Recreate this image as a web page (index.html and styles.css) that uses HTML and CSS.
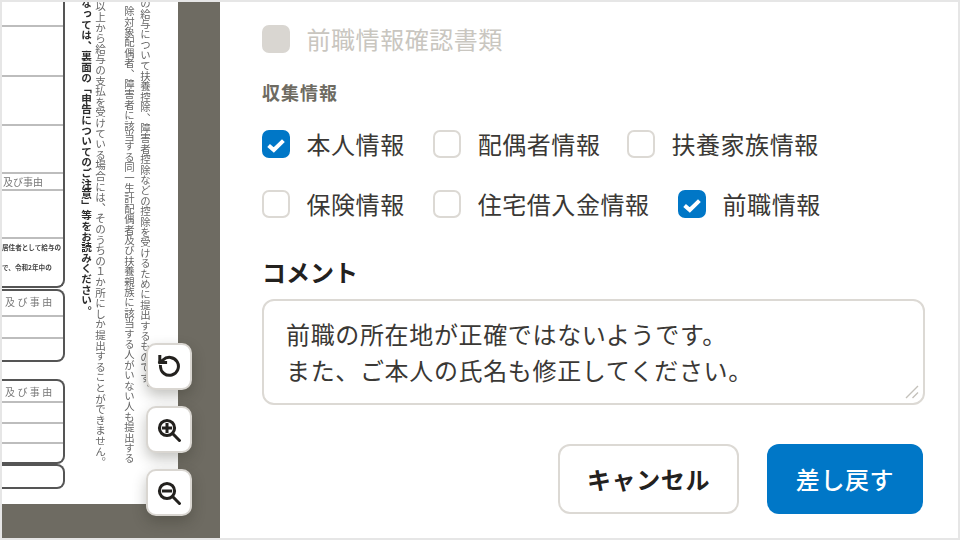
FILE: index.html
```html
<!DOCTYPE html>
<html lang="ja">
<head>
<meta charset="utf-8">
<title>差し戻し</title>
<link rel="stylesheet" href="styles.css">
</head>
<body>
<main class="frame">
  <section class="viewer">
    <div class="paper">
      <div class="form">
        <div class="box box-top">
          <div class="cell h25"></div>
          <div class="cell h50"></div>
          <div class="cell h49"></div>
          <div class="cell h48"></div>
          <div class="cell h17 reason">及び事由</div>
          <div class="cell h48"></div>
          <div class="note">
            <span>居住者として給与の</span>
            <span>で、令和2年中の</span>
          </div>
        </div>
        <div class="box box-a">
          <div class="cell h26 reason wide">及び事由</div>
          <div class="cell h22"></div>
          <div class="cell h22 last"></div>
        </div>
        <div class="box box-b">
          <div class="cell h22 reason wide">及び事由</div>
          <div class="cell h21"></div>
          <div class="cell h20"></div>
          <div class="cell h20 last"></div>
        </div>
        <div class="box box-c"></div>
      </div>
      <div class="columns">
        <p class="vtext strong c4">なっては、裏面の「申告についてのご注意」等をお読みください。</p>
        <p class="vtext c3">以上から給与の支払を受けている場合には、そのうちの１か所にしか提出することができません。</p>
        <p class="vtext c2">除対象配偶者、障害者に該当する同一生計配偶者及び扶養親族に該当する人がいない人も提出する</p>
        <p class="vtext c1">の給与について扶養控除、障害者控除などの控除を受けるために提出するものです。</p>
      </div>
    </div>
    <div class="tools">
      <button class="tool" type="button" aria-label="回転">
        <svg viewBox="0 0 24 24" class="tool-icon"><path d="M3.4 11.4a9 9 0 1 0 2.6-6.4L2.8 7.4"/><path d="M2.8 1.6v5.8h5.8"/></svg>
      </button>
      <button class="tool" type="button" aria-label="拡大">
        <svg viewBox="0 0 24 24" class="tool-icon"><circle cx="10" cy="10" r="7.6"/><path d="M15.6 15.6 22.4 22.4"/><path d="M6.4 10h7.2M10 6.4v7.2"/></svg>
      </button>
      <button class="tool" type="button" aria-label="縮小">
        <svg viewBox="0 0 24 24" class="tool-icon"><circle cx="10" cy="10" r="7.6"/><path d="M15.6 15.6 22.4 22.4"/><path d="M6.4 10h7.2"/></svg>
      </button>
    </div>
  </section>

  <section class="panel">
    <div class="check-row first">
      <label class="check disabled"><span class="box-input"></span><span>前職情報確認書類</span></label>
    </div>
    <h2 class="section-label">収集情報</h2>
    <div class="check-row info">
      <label class="check"><span class="box-input on"><svg viewBox="0 0 28 28"><path d="M6.6 15.4 11.8 20 21.4 10.6"/></svg></span><span>本人情報</span></label>
      <label class="check tight"><span class="box-input"></span><span>配偶者情報</span></label>
      <label class="check"><span class="box-input"></span><span>扶養家族情報</span></label>
    </div>
    <div class="check-row info second">
      <label class="check"><span class="box-input"></span><span>保険情報</span></label>
      <label class="check"><span class="box-input"></span><span>住宅借入金情報</span></label>
      <label class="check"><span class="box-input on"><svg viewBox="0 0 28 28"><path d="M6.6 15.4 11.8 20 21.4 10.6"/></svg></span><span>前職情報</span></label>
    </div>
    <label class="comment-label" for="comment">コメント</label>
    <div class="comment-wrap">
      <textarea id="comment" class="comment">前職の所在地が正確ではないようです。
また、ご本人の氏名も修正してください。</textarea>
      <svg class="grip" viewBox="0 0 14 14"><path d="M1 13 13 1M7.5 13 13 7.5"/></svg>
    </div>
    <div class="actions">
      <button class="btn cancel" type="button">キャンセル</button>
      <button class="btn primary" type="button">差し戻す</button>
    </div>
  </section>
</main>
</body>
</html>
```
FILE: styles.css
```css
* { box-sizing: border-box; }
html, body { margin: 0; padding: 0; }
body {
  width: 960px;
  height: 540px;
  overflow: hidden;
  background: #fff;
  font-family: "Noto Sans CJK JP", "Noto Sans", sans-serif;
  color: #3a3835;
}
.frame {
  width: 960px;
  height: 540px;
  border: 2px solid #e6e6e6;
  display: flex;
}

/* document viewer */
.viewer {
  width: 218px;
  flex: none;
  background: #6e6b62;
  position: relative;
  overflow: hidden;
}
.paper {
  width: 176px;
  height: 502px;
  background: #fff;
  display: flex;
  overflow: hidden;
  filter: blur(0.6px);
}
.form { width: 63px; flex: none; display: flex; flex-direction: column; }
.box {
  border: 2px solid #555;
  border-left: 0;
  border-radius: 0 8px 8px 0;
}
.box-top { height: 286px; border-top: 0; border-radius: 0 0 8px 0; }
.box-a { height: 73px; margin-top: 1px; }
.box-b { height: 85px; margin-top: 17px; }
.box-c { height: 25px; }
.cell { border-bottom: 2px solid #bdbdbd; }
.cell.last { border-bottom: 0; }
.h17 { height: 17px; }
.h20 { height: 20px; }
.h21 { height: 21px; }
.h22 { height: 22px; }
.h25 { height: 25px; }
.h26 { height: 26px; }
.h48 { height: 48px; }
.h49 { height: 49px; }
.h50 { height: 50px; }
.reason {
  font-size: 10px;
  line-height: 15px;
  color: #777;
  padding-left: 1px;
  white-space: nowrap;
  display: flex;
  align-items: center;
}
.reason.wide { letter-spacing: 2.4px; padding-left: 3px; align-items: flex-start; padding-top: 3px; }
.note {
  display: flex;
  flex-direction: column;
  gap: 12px;
  padding-top: 4px;
  font-size: 6.6px;
  line-height: 8px;
  font-weight: 700;
  color: #444;
  white-space: nowrap;
}
.columns {
  flex: 1;
  display: flex;
  padding-left: 14px;
}
.vtext {
  margin: 0;
  writing-mode: vertical-rl;
  white-space: nowrap;
  color: #666;
  line-height: 14px;
  width: 14px;
  flex: none;
}
.strong { color: #2c2c2c; font-weight: 700; }
.c4 { margin-top: -4px; font-size: 10.6px; }
.c3 { margin-top: -1px; font-size: 10.6px; }
.c2 { margin-top: 4px; margin-left: 15px; font-size: 10.4px; }
.c1 { margin-top: -4px; margin-left: 2px; font-size: 10.4px; }

.tools {
  position: absolute;
  left: 144px;
  top: 341px;
  display: flex;
  flex-direction: column;
  gap: 16px;
}
.tool {
  width: 46px;
  height: 47px;
  padding: 0;
  background: #fff;
  border: 2px solid #d9d6d1;
  border-radius: 10px;
  box-shadow: 0 6px 14px rgba(40, 38, 30, .28);
  display: flex;
  align-items: center;
  justify-content: center;
}
.tool-icon {
  width: 24px;
  height: 24px;
  fill: none;
  stroke: #23211e;
  stroke-width: 3;
  stroke-linecap: square;
}

/* right panel */
.panel {
  flex: 1;
  padding: 23px 34px 0 42px;
  min-width: 0;
}
.check-row { display: flex; gap: 28.5px; }
.check-row.info { margin-top: 24px; }
.check-row.info.second { margin-top: 32px; }
.check {
  display: flex;
  align-items: center;
  gap: 16.5px;
  height: 28px;
  font-size: 24px;
  letter-spacing: .55px;
  line-height: 28px;
  white-space: nowrap;
}
.tight { margin-right: -2px; }
.box-input {
  width: 28px;
  height: 28px;
  flex: none;
  background: #fff;
  border: 2px solid #dcd9d4;
  border-radius: 7px;
  display: block;
}
.box-input.on { background: #0077c7; border-color: #0077c7; position: relative; }
.box-input svg {
  position: absolute;
  left: -2px;
  top: -2px;
  width: 28px;
  height: 28px;
  fill: none;
  stroke: #fff;
  stroke-width: 4;
}
.disabled { color: #c9c6c0; }
.disabled .box-input { background: #d9d6d1; border-color: #d9d6d1; }
.section-label {
  margin: 25px 0 0;
  font-size: 18px;
  letter-spacing: 1px;
  line-height: 28px;
  font-weight: 700;
  color: #6e6b62;
}
.comment-label {
  display: block;
  margin-top: 37px;
  font-size: 24px;
  line-height: 34px;
  font-weight: 700;
  color: #23211e;
}
.comment-wrap { position: relative; margin-top: 10px; height: 106px; }
.comment {
  display: block;
  width: 663px;
  height: 106px;
  margin: 0;
  padding: 15px 22px;
  border: 2px solid #dcd9d4;
  border-radius: 12px;
  resize: none;
  outline: 0;
  overflow: hidden;
  font-family: inherit;
  font-size: 24px;
  letter-spacing: .65px;
  line-height: 36px;
  color: #3a3835;
  background: #fff;
}
.grip {
  position: absolute;
  right: 5px;
  bottom: 6px;
  width: 14px;
  height: 14px;
  fill: none;
  stroke: #c4c1bb;
  stroke-width: 1.4;
}
.actions {
  display: flex;
  justify-content: flex-end;
  gap: 28px;
  margin: 39px 1px 0 0;
}
.btn {
  height: 70px;
  padding: 0;
  border-radius: 12px;
  font-family: inherit;
  font-size: 24px;
  letter-spacing: .6px;
  line-height: 36px;
  display: flex;
  align-items: center;
  justify-content: center;
}
.cancel {
  width: 181px;
  background: #fff;
  border: 2px solid #dcd9d4;
  color: #23211e;
  font-weight: 700;
}
.primary {
  width: 156px;
  background: #0077c7;
  border: 0;
  color: #fff;
  font-weight: 500;
}
```
